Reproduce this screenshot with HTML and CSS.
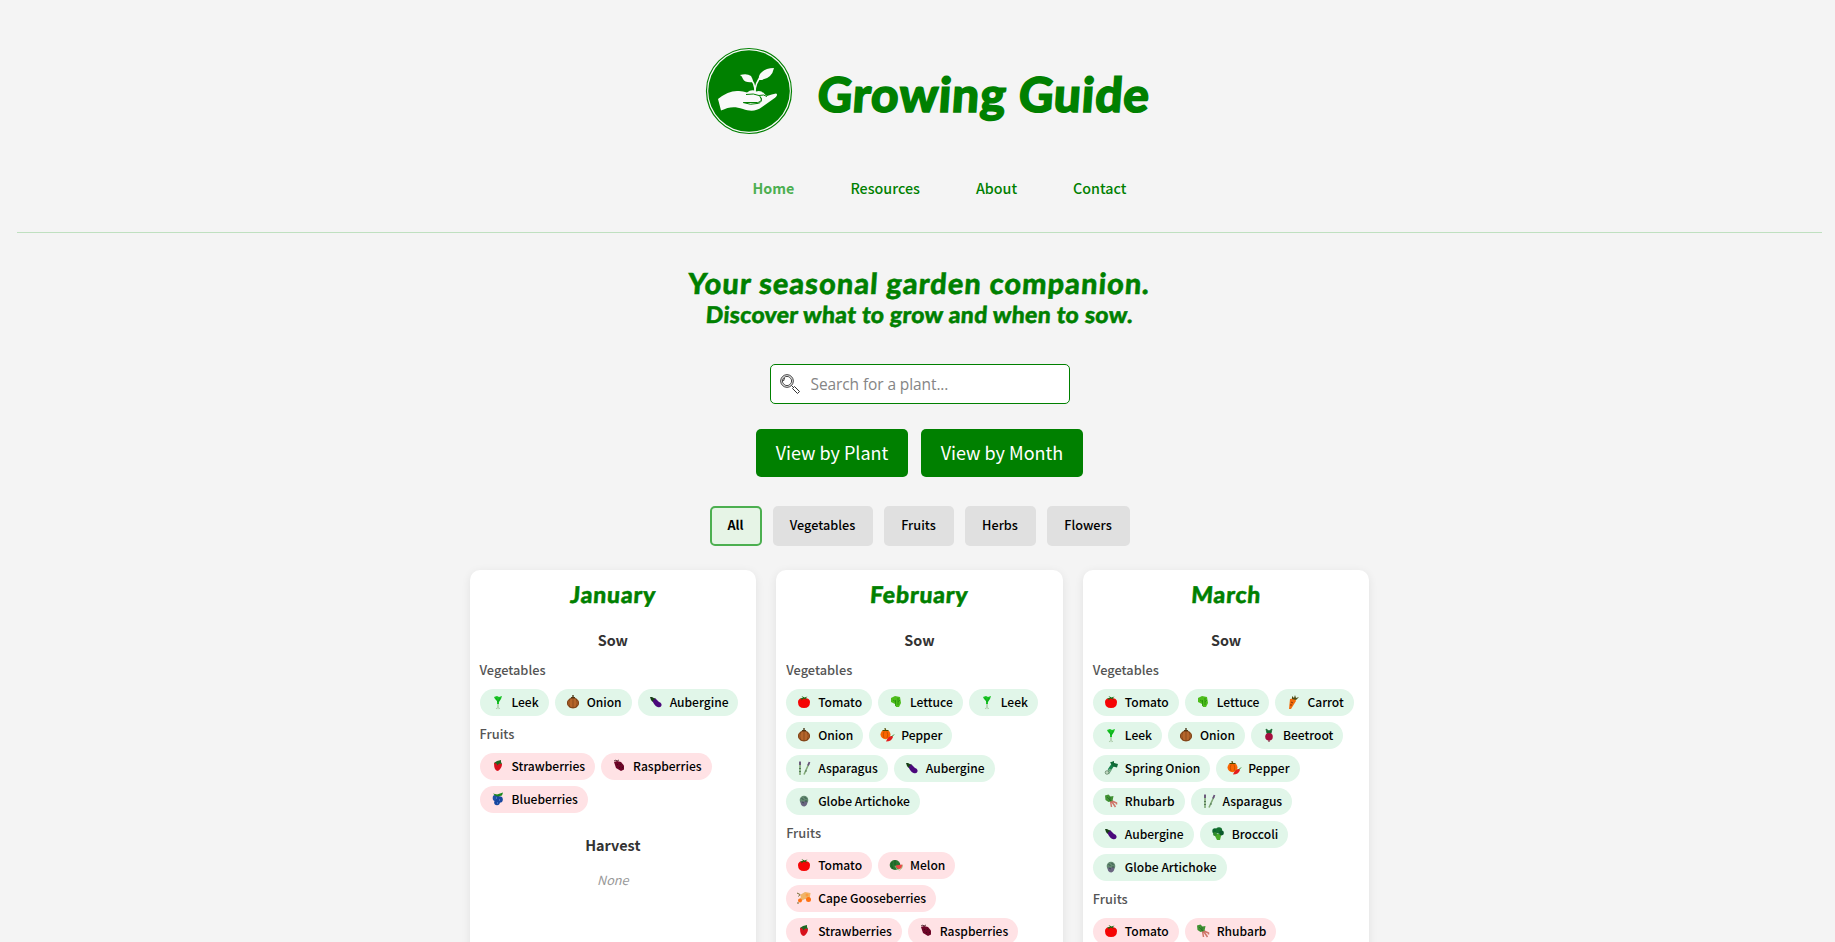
FILE: index.html
```html
<!DOCTYPE html>
<html lang="en">
<head>
<meta charset="utf-8">
<title>Growing Guide</title>
<link rel="stylesheet" href="styles.css">
</head>
<body>
<svg class="sprite" width="0" height="0" aria-hidden="true">
  <symbol id="leek" viewBox="0 0 16 16"><path d="M8 8v6M7 14l-.5 1M9 14l.3 1" stroke="#a9c9a6" stroke-width="1.5" fill="none"/><path d="M4 3l3-1 2 1 3-1-1 3-2 3v2H7V7L5 5z" fill="#17c423"/><path d="M6 4l2 4 2-4" stroke="#0a9d1c" fill="none" stroke-width=".7"/></symbol>
  <symbol id="onion" viewBox="0 0 16 16"><path d="M8 1v3M6 4l2-1 2 1" stroke="#3f2b0b" stroke-width="1.3" fill="none"/><ellipse cx="8" cy="9" rx="6" ry="5.2" fill="#b5652a"/><path d="M5 4.5Q2.500 9 5 13.500M8 4v10M11 4.500Q13.500 9 11 13.500" stroke="#7d421a" stroke-width=".7" fill="none"/><ellipse cx="8" cy="9" rx="5.600" ry="4.900" fill="none" stroke="#65330f" stroke-width=".7"/></symbol>
  <symbol id="aubergine" viewBox="0 0 16 16"><path d="M4 6l3-2 4 4q3 1 2.500 3.500-.5 2.500-4 1.500-3-1-5.500-7z" fill="#4b087c"/><path d="M2 3l2 0 3.500 2-2 1-1 2-1.500-2z" fill="#173f16"/></symbol>
  <symbol id="strawberry" viewBox="0 0 16 16"><path d="M4 5l4-1 4 2q0 4-4 7-4 0-4-8z" fill="#d8101c"/><path d="M4 5l3-2 4-1 0 2 1 2-3-.5-1.500 2-1-2z" fill="#1c6722"/></symbol>
  <symbol id="raspberry" viewBox="0 0 16 16"><path d="M3 4l3-1 4 1 3 3.500v4l-3 1.500-5-3z" fill="#6d0527"/><path d="M3 3l2-1 1 1 2-1M6 6l1 1M9 6l1 1M8 9l1 1M11 9l1 1" stroke="#380d16" fill="none" stroke-width=".8"/></symbol>
  <symbol id="blueberry" viewBox="0 0 16 16"><circle cx="6" cy="7" r="3.300" fill="#2152a4"/><circle cx="9.500" cy="8.500" r="3.300" fill="#1847a0"/><circle cx="7" cy="11.500" r="2.800" fill="#1747a0"/><path d="M3 2.500l4 1 6-2-1 3-4 1-3-1z" fill="#1c871c"/><path d="M6 7h1M9 9h1M7 12h1" stroke="#6b9ddd"/></symbol>
  <symbol id="tomato" viewBox="0 0 16 16"><path d="M2 8q0-4 6-4t6 4q0 6-6 6T2 8z" fill="#f50505"/><path d="M3.500 4.500l3.500-.5-1.500-2 3 1.500 3-1-2 2 2 1.500-4-1.500-2 2V5z" fill="#176a12"/></symbol>
  <symbol id="lettuce" viewBox="0 0 16 16"><path d="M3 4l4-2 5 1 1 6-2 4-3 0-1-3-4-2z" fill="#4dbd1b"/><path d="M7.500 12V6M10 11V4M5 6l3 2M12 6l-2 2" stroke="#258f0b" fill="none" stroke-width=".8"/></symbol>
  <symbol id="pepper" viewBox="0 0 16 16"><ellipse cx="6.500" cy="7.500" rx="5" ry="4.700" fill="#fa6500"/><path d="M5 4.500Q3.500 8 5 11M8 4.500Q9.500 8 8 11" stroke="#a84300" stroke-width=".6" fill="none"/><path d="M3.500 3.500h6M6.500 3.500l-.5-2.500" stroke="#4f4a00" stroke-width="1.200"/><path d="M7 14.500q1.500-4.500 5-5.500 2-.5 2 1-1.500 4.500-7 4.500z" fill="#e51d1d"/><path d="M13 9.500l2-2" stroke="#268326"/></symbol>
  <symbol id="asparagus" viewBox="0 0 16 16"><path d="M4 15V2M8 14.500l5-11" stroke="#82aa77" stroke-width="1.600"/><path d="M4 5V1.500M12 5.500l1.500-3.500" stroke="#68517a" stroke-width="1.800"/><path d="M3 8.500h2M3 11.500h2M9 11h2" stroke="#416849" stroke-width=".8"/></symbol>
  <symbol id="artichoke" viewBox="0 0 16 16"><circle cx="8" cy="7" r="4.300" fill="#62896f"/><path d="M4.500 8.500q0 5 4 5 3-1 3-5z" fill="#6a6580"/><path d="M5.500 5.500l2 1M8.500 4l2 2M9 8l2 0M6 9l2 1" stroke="#2f4845" stroke-width=".8"/></symbol>
  <symbol id="melon" viewBox="0 0 16 16"><ellipse cx="7" cy="8" rx="5.300" ry="5" fill="#2a762f"/><path d="M4 5q-1 4 1 7M7 3v5" stroke="#174d21" stroke-width=".7" fill="none"/><path d="M7.500 8.500l7-1q0 4-3 4.500-3 0-4-3.500z" fill="#ef4545"/><path d="M7 9q1.500 4 4.500 4 3-1 3-5" stroke="#97c37c" fill="none" stroke-width=".8"/></symbol>
  <symbol id="gooseberry" viewBox="0 0 16 16"><path d="M4 5l5-3 5.500 1-1 7-4.500-1-4 2-2-1 2-3z" fill="#efb468"/><circle cx="4" cy="10.500" r="2" fill="#ff7112"/><circle cx="12.500" cy="9.500" r="2.500" fill="#ff7112"/><circle cx="11" cy="5" r="1.500" fill="#ff9a3c"/><path d="M1 3l3 1.500-1.500 2M1 13h2" stroke="#746b33" fill="none"/></symbol>
  <symbol id="carrot" viewBox="0 0 16 16"><path d="M5 5l5-1 1 3-5 8H4z" fill="#f26b0b"/><path d="M7 5l0-3 2 2 1-3 1 3 3-1-3 3z" fill="#4f4b13"/><path d="M6 8l2 1M5 11l2 0" stroke="#88370b"/></symbol>
  <symbol id="beetroot" viewBox="0 0 16 16"><path d="M5 2l3 2 3-2-1 4.500H6z" stroke="#17642e" stroke-width=".8" fill="#17642e"/><circle cx="8" cy="9.700" r="3.800" fill="#a50d3e"/><path d="M8 13v2" stroke="#79112d"/></symbol>
  <symbol id="spring" viewBox="0 0 16 16"><path d="M6 10.500l5-7.500" stroke="#15824b" stroke-width="3.200"/><path d="M7 2.500l4-1.500 0 2 4 1-1 3.500-4-1z" fill="#116b38"/><path d="M3.500 13l3.500-4M5.500 14l3-5" stroke="#75aa85" stroke-width="1.400"/><circle cx="4" cy="12.500" r="1.800" fill="#c2d8c2" stroke="#426b49" stroke-width=".6"/></symbol>
  <symbol id="rhubarb" viewBox="0 0 16 16"><path d="M8 7.500l5.500 2.500v1.500M8 7.500l4.500 6.500M7.500 8l1 6" stroke="#cf7468" stroke-width="1.500" fill="none"/><path d="M2 2.500l3.500-1 2 2 3-.5-1 5-4 1-3-2z" fill="#409132"/><path d="M4 4l4 4M7 4v4" stroke="#246928" stroke-width=".7"/></symbol>
  <symbol id="broccoli" viewBox="0 0 16 16"><path d="M4 8l3 6h3l1.500-6z" fill="#48a927"/><circle cx="5" cy="5" r="2.700" fill="#0d672d"/><circle cx="9" cy="4.500" r="3.200" fill="#146f2e"/><circle cx="11.500" cy="7" r="2.400" fill="#0b592b"/><circle cx="5" cy="8" r="2" fill="#2f892d"/></symbol>
</svg>
<header class="header">
  <div class="brand">
    <svg class="logo" viewBox="0 0 88 88" aria-hidden="true">
      <circle cx="44" cy="44" r="42.500" fill="#f9f9f9" stroke="green" stroke-width="1.200"/>
      <circle cx="44" cy="44" r="40.800" fill="green"/>
      <path fill="#f9f9f9" d="M13 52q11-9 21-8 4 0 8 1.500 5-4 9-1 5-2 9 3l2 1.500q5-2 9-2.500c2.500 1 0 4-2 5L57 60c-6 4.500-12 4.500-19 2-9-3-14-2-22 1.500z"/>
      <path d="M41 47.500q8-1.500 13 1c5 4 1 7.500-3 7H39M54 48.500q5-1.500 8 1M38 55.500q8 3 14 1c4 0 6-4 3-6.500" fill="none" stroke="green" stroke-width="1"/>
      <path d="M50 45q0-10-5-13M50 45q0-9 7-17" fill="none" stroke="#f9f9f9" stroke-width="1.600"/>
      <path fill="#f9f9f9" d="M35 28q7-2 11 1 2 3 2 6-8 1-10-3-1-3-3-4zM54 33q-1-5 3-8 4-4 12-4-1 5-4 8-4 4-11 4z"/>
    </svg>
    <h1 class="title">Growing Guide</h1>
  </div>
  <nav class="nav"><a class="active">Home</a><a>Resources</a><a>About</a><a>Contact</a></nav>
</header>
<main class="main">
  <h2 class="tagline">Your seasonal garden companion.</h2>
  <h3 class="subline">Discover what to grow and when to sow.</h3>
  <label class="search">
    <svg viewBox="0 0 20 20" fill="none" stroke="#333"><circle cx="7" cy="7" r="6.300" stroke-width="1"/><circle cx="7" cy="7" r="4.600" stroke-width=".9"/><path d="M11.500 11.500l2 2M12.500 14.500l2-2 5 5-2 2zM3.500 7l1-3" stroke-width="1"/></svg>
    <input placeholder="Search for a plant...">
  </label>
  <div class="views"><button class="by-plant">View by Plant</button><button class="by-month">View by Month</button></div>
  <div class="filters"><button class="selected">All</button><button class="f-veg">Vegetables</button><button class="f-fruit">Fruits</button><button class="f-herb">Herbs</button><button class="f-flower">Flowers</button></div>
  <div class="months">
    <section class="month"><h2>January</h2><h3>Sow</h3>
      <h4>Vegetables</h4>
      <ul class="chips veg"><li><svg><use href="#leek"/></svg>Leek</li><li><svg><use href="#onion"/></svg>Onion</li><li><svg><use href="#aubergine"/></svg>Aubergine</li></ul>
      <h4>Fruits</h4>
      <ul class="chips fruit"><li><svg><use href="#strawberry"/></svg>Strawberries</li><li><svg><use href="#raspberry"/></svg>Raspberries</li><li><svg><use href="#blueberry"/></svg>Blueberries</li></ul>
      <h3 class="harvest">Harvest</h3><p class="none">None</p>
    </section>
    <section class="month"><h2>February</h2><h3>Sow</h3>
      <h4>Vegetables</h4>
      <ul class="chips veg"><li><svg><use href="#tomato"/></svg>Tomato</li><li><svg><use href="#lettuce"/></svg>Lettuce</li><li><svg><use href="#leek"/></svg>Leek</li><li><svg><use href="#onion"/></svg>Onion</li><li><svg><use href="#pepper"/></svg>Pepper</li><li><svg><use href="#asparagus"/></svg>Asparagus</li><li><svg><use href="#aubergine"/></svg>Aubergine</li><li><svg><use href="#artichoke"/></svg>Globe Artichoke</li></ul>
      <h4>Fruits</h4>
      <ul class="chips fruit"><li><svg><use href="#tomato"/></svg>Tomato</li><li><svg><use href="#melon"/></svg>Melon</li><li><svg><use href="#gooseberry"/></svg>Cape Gooseberries</li><li><svg><use href="#strawberry"/></svg>Strawberries</li><li><svg><use href="#raspberry"/></svg>Raspberries</li></ul>
    </section>
    <section class="month"><h2>March</h2><h3>Sow</h3>
      <h4>Vegetables</h4>
      <ul class="chips veg"><li><svg><use href="#tomato"/></svg>Tomato</li><li><svg><use href="#lettuce"/></svg>Lettuce</li><li><svg><use href="#carrot"/></svg>Carrot</li><li><svg><use href="#leek"/></svg>Leek</li><li><svg><use href="#onion"/></svg>Onion</li><li><svg><use href="#beetroot"/></svg>Beetroot</li><li><svg><use href="#spring"/></svg>Spring Onion</li><li><svg><use href="#pepper"/></svg>Pepper</li><li><svg><use href="#rhubarb"/></svg>Rhubarb</li><li><svg><use href="#asparagus"/></svg>Asparagus</li><li><svg><use href="#aubergine"/></svg>Aubergine</li><li><svg><use href="#broccoli"/></svg>Broccoli</li><li><svg><use href="#artichoke"/></svg>Globe Artichoke</li></ul>
      <h4>Fruits</h4>
      <ul class="chips fruit"><li><svg><use href="#tomato"/></svg>Tomato</li><li><svg><use href="#rhubarb"/></svg>Rhubarb</li></ul>
    </section>
  </div>
</main>
</body>
</html>
```
FILE: styles.css
```css
* { box-sizing: border-box; }
html, body { height: 100%; }
body { margin: 0; padding: 0 13px 0 17px; background: #f4f4f4; font-family: "Noto Sans CJK SC", "Open Sans", sans-serif; color: #000; overflow: hidden; }
h1, h2, h3, h4, p, ul { margin: 0; padding: 0; }
.sprite { position: absolute; }
.header { height: 233px; padding-top: 47px; border-bottom: 1px solid #bfe0c0; }
.brand { display: flex; width: 444px; height: 88px; margin-left: 688px; gap: 25px; }
.logo { width: 88px; height: 88px; flex: none; }
.title, .tagline, .subline, .month h2 { font-family: Lato, sans-serif; font-weight: 900; color: green; white-space: nowrap; transform: skewX(-4deg); -webkit-text-stroke: .5px green; }
.title { font-size: 48px; line-height: 94px; letter-spacing: 0.8px; -webkit-text-stroke: 1.4px green; }
.nav { display: flex; justify-content: center; gap: 56px; margin: 42px 0 0 40px; font-size: 14.3px; line-height: 22px; color: green; font-weight: 500; }
.nav .active { color: #4caf50; font-weight: 700; }
.main { display: flex; flex-direction: column; align-items: center; padding-top: 34px; }
.tagline { font-size: 29px; line-height: 32px; letter-spacing: 1px; }
.subline { font-size: 23px; line-height: 30px; letter-spacing: .28px; }
.search { display: flex; align-items: center; gap: 11px; width: 300px; height: 40px; margin-top: 35px; padding: 0 9px; border: 1px solid green; border-radius: 5px; background: #fff; }
.search svg { width: 20px; height: 20px; flex: none; }
.search input { width: 230px; padding: 0; border: 0; outline: 0; font: 400 15.5px "Open Sans", sans-serif; letter-spacing: -.1px; }
.search input::placeholder { color: #858585; }
button { border: 0; padding: 0 0 3px; border-radius: 5px; font-family: inherit; }
.views { display: flex; gap: 13px; margin-top: 25px; }
.views button { height: 48px; background: green; color: #fff; font-size: 18px; }
.by-plant { width: 152px; }
.by-month { width: 162px; }
.filters { display: flex; gap: 11px; margin-top: 29px; }
.filters button { height: 40px; background: #e0e0e0; font-size: 12.7px; font-weight: 500; }
.filters .selected { width: 52px; background: #e6f4e6; border: 2px solid #4caf50; font-weight: 700; }
.f-veg { width: 100px; }
.f-fruit { width: 70px; }
.f-herb { width: 71px; }
.f-flower { width: 83px; }
.months { display: grid; grid-template-columns: repeat(3, 1fr); gap: 20px; width: 900px; height: 600px; margin: 24px 0 0; }
.month { padding: 9px 10px 10px; background: #fff; border-radius: 10px; box-shadow: 0 2px 10px rgba(0,0,0,.08); }
.month h2 { font-size: 23px; line-height: 30px; text-align: center; letter-spacing: .8px; }
.month h3 { margin-top: 20px; font-size: 14.4px; line-height: 22px; text-align: center; color: #333; }
.month h4 { height: 37px; font-size: 12.8px; line-height: 35px; font-weight: 500; color: #555; }
.month h3 + h4 { height: 38px; line-height: 37px; }
.chips { display: flex; flex-wrap: wrap; gap: 6px; list-style: none; }
.chips li { display: flex; align-items: center; height: 27px; padding: 0 10px 2px; border-radius: 14px; font-size: 12.05px; line-height: 25px; font-weight: 500; white-space: nowrap; }
.chips svg { width: 16px; height: 16px; margin-right: 6px; }
.veg li { background: #e1f6e9; }
.fruit li { background: #ffe2e5; }
.month .harvest { margin-top: 21px; }
.none { margin-top: 14px; font-size: 12.7px; line-height: 20px; font-style: italic; color: #999; text-align: center; }
```
